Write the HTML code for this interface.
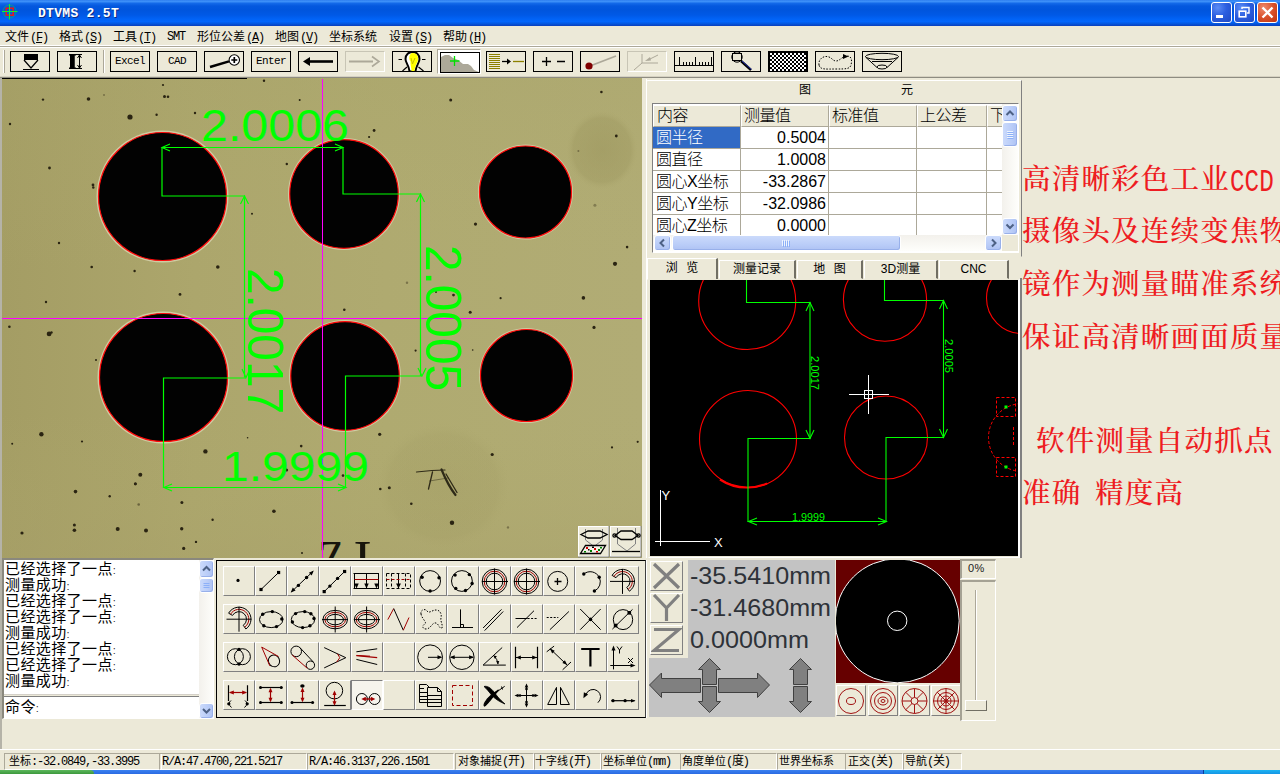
<!DOCTYPE html>
<html lang="zh-CN">
<head>
<meta charset="utf-8">
<title>DTVMS 2.5T</title>
<style>
html,body{margin:0;padding:0;}
body{width:1280px;height:774px;overflow:hidden;position:relative;background:#ECE9D8;font-family:"Liberation Sans","Noto Sans CJK SC",sans-serif;font-size:12px;color:#000;}
.abs{position:absolute;}
svg{position:absolute;overflow:hidden;}
#title{left:0;top:0;width:1280px;height:26px;background:linear-gradient(to bottom,#2F7FF0 0,#3C8FF8 1.5px,#1268E8 3.5px,#0458DE 6px,#0055DD 10px,#0059E6 15px,#0163F6 19px,#0366FC 21.5px,#0459E2 23.5px,#0A3FBC 26px);}
#title .t{left:38px;top:5.5px;font:bold 13px "Liberation Mono","Noto Sans CJK SC",monospace;color:#fff;letter-spacing:0.3px;white-space:nowrap;text-shadow:1px 1px 0 #0A2B86;}
.cb{top:2px;width:19px;height:19px;border:1px solid #fff;border-radius:3px;background:radial-gradient(circle at 30% 25%,#5B8CF5 0,#2C5FE0 45%,#1F49C4 100%);}
.cb.x{background:radial-gradient(circle at 30% 25%,#EE8A6C 0,#D9512B 50%,#BF3510 100%);}
#menu{left:0;top:26px;width:1280px;height:19px;background:#ECE9D8;}
#menu span{position:absolute;top:1px;font-size:12px;white-space:nowrap;letter-spacing:0;}
#menu span i{font-style:normal;font-family:"Liberation Mono",monospace;font-size:12px;letter-spacing:-1.2px;margin-left:1px}
.tb{position:absolute;top:51px;width:38px;height:19px;border:1px solid #000;background:#ECE9D8;box-sizing:content-box;}
.tb svg{left:0;top:0;width:38px;height:19px;}
.tb span{position:absolute;left:0;top:3px;width:38px;text-align:center;font:11px "Liberation Mono",monospace;letter-spacing:-0.6px;}
.pb{position:absolute;width:30px;height:28px;border:1px solid;border-color:#fff #808080 #808080 #fff;background:#ECE9D8;}
.pb svg{left:0;top:0;width:30px;height:28px;}
.st{position:absolute;top:753px;height:15px;border:1px solid;border-color:#ACA899 #fff #fff #ACA899;font-size:11px;line-height:15px;white-space:nowrap;overflow:hidden;}
.st b{font-weight:normal;font-family:"Liberation Mono",monospace;font-size:12px;letter-spacing:-1.2px;}
</style>
</head>
<body>
<div id="title" class="abs">
<svg style="left:1px;top:3px;width:18px;height:18px" viewBox="1 3 18 18"><circle cx="9.500" cy="11.500" r="6.500" fill="none" stroke="#18C848" stroke-width="0.700" opacity="0.700"/><rect x="6.200" y="8.200" width="7" height="7" fill="none" stroke="#F01818" stroke-width="1.500"/><path d="M9.500 4V19.500M2 11.500H17.500" stroke="#10F030" stroke-width="1.100"/></svg>
<div class="abs t">DTVMS 2.5T</div>
<div class="abs cb" style="left:1211px"><svg style="left:0;top:0;width:19px;height:19px" viewBox="0 0 19 19"><rect x="4" y="12" width="7" height="3" fill="#fff"/></svg></div>
<div class="abs cb" style="left:1234px"><svg style="left:0;top:0;width:19px;height:19px" viewBox="0 0 19 19"><path d="M7 6V4.5H14V10H12" fill="none" stroke="#fff" stroke-width="1.4"/><rect x="4.2" y="8.2" width="6.6" height="5.6" fill="none" stroke="#fff" stroke-width="1.6"/></svg></div>
<div class="abs cb x" style="left:1257px"><svg style="left:0;top:0;width:19px;height:19px" viewBox="0 0 19 19"><path d="M4.5 4.5L14.5 14.5M14.5 4.5L4.5 14.5" stroke="#fff" stroke-width="2.4"/></svg></div>
</div>
<div id="menu" class="abs">
<span style="left:5px">文件<i>(<u>F</u>)</i></span>
<span style="left:59px">格式<i>(<u>S</u>)</i></span>
<span style="left:113px">工具<i>(<u>T</u>)</i></span>
<span style="left:166px;top:3px"><i>SMT</i></span>
<span style="left:197px">形位公差<i>(<u>A</u>)</i></span>
<span style="left:275px">地图<i>(<u>V</u>)</i></span>
<span style="left:329px">坐标系统</span>
<span style="left:389px">设置<i>(<u>S</u>)</i></span>
<span style="left:443px">帮助<i>(<u>H</u>)</i></span>
</div>
<div class="abs" style="left:0;top:45px;width:1280px;height:1px;background:#fff"></div>
<div class="abs" style="left:0;top:46px;width:1280px;height:1px;background:#ACA899"></div>
<div class="abs" style="left:0;top:47px;width:1280px;height:1px;background:#fff"></div>
<div class="abs" style="left:3px;top:50px;width:1px;height:23px;background:#fff"></div>
<div class="abs" style="left:4px;top:50px;width:1px;height:23px;background:#ACA899"></div>
<div class="abs" style="left:103px;top:50px;width:1px;height:23px;background:#ACA899"></div>
<div class="abs" style="left:104px;top:50px;width:1px;height:23px;background:#fff"></div>
<div class="tb" style="left:10px"><svg viewBox="0 0 38 19"><path d="M13 2H27V8H13Z" fill="#000"/><path d="M13 8L20 16L27 8M12 17.5H28" fill="none" stroke="#000" stroke-width="1.2"/></svg></div>
<div class="tb" style="left:57px"><svg viewBox="0 0 38 19"><path d="M11 2H18V3.5H16.5V15.5H18V17H11V15.5H12V3.5H11Z" fill="#000"/><path d="M11 2.5H24M11 16.5H24M21.5 3V16M19.5 6L21.5 3L23.5 6M19.5 13L21.5 16L23.5 13" fill="none" stroke="#000" stroke-width="1"/><rect x="12" y="3" width="4.5" height="13" fill="#000"/></svg></div>
<div class="tb" style="left:110px"><span>Excel</span></div>
<div class="tb" style="left:157px"><span>CAD</span></div>
<div class="tb" style="left:204px"><svg viewBox="0 0 38 19"><path d="M5 15L24 9.300" stroke="#000" stroke-width="2.400"/><circle cx="29.300" cy="8" r="5.200" fill="#fff" stroke="#000" stroke-width="1.100"/><path d="M26.300 8H32.300M29.300 5V11" stroke="#000" stroke-width="1.700"/></svg></div>
<div class="tb" style="left:251px"><span>Enter</span></div>
<div class="tb" style="left:298px"><svg viewBox="0 0 38 19"><path d="M9 9.5H34" stroke="#000" stroke-width="2.6"/><path d="M4 9.5L11 5V14Z" fill="#000"/></svg></div>
<div class="tb" style="left:345px;border-color:#C8C5B5 #fff #fff #C8C5B5;background:#ECE9D8"><svg viewBox="0 0 38 19"><path d="M3 9.5H27" stroke="#ACA899" stroke-width="2"/><path d="M26 4.5L33 9.5L26 14.5" fill="none" stroke="#ACA899" stroke-width="1.6"/></svg></div>
<div class="tb" style="left:392px"><svg viewBox="0 0 38 19"><path d="M12.500 7C12.500 -2.500 26.500 -2.500 26.500 7C26.500 11 23 13 22.500 19.500H16.500C16 13 12.500 11 12.500 7Z" fill="#fff" stroke="#000" stroke-width="2"/><path d="M19 1C24.500 0.500 25.500 5 25 8C24.500 11 22 13.500 21.500 19H18.500C18.500 15 17 12.500 17.500 9.500C15.500 7 16 2 19 1Z" fill="#FFFF00"/><path d="M18 6L19.500 12L22 6" fill="none" stroke="#C8C000" stroke-width="1"/><path d="M5.500 7.500H9M29 7.500H32.500M14 15L9.500 19M25.500 15L30.500 19" stroke="#000" stroke-width="1.200"/></svg></div>
<div class="abs" style="left:437px;top:49px;width:44px;height:25px;background:#fff;border:1px solid;border-color:#ACA899 #fff #fff #ACA899;box-sizing:border-box"></div>
<div class="tb" style="left:440px;top:52px;background:#fff"><svg viewBox="0 0 38 19"><path d="M0 19V4L4 2H8L12 5L17 7L22 11H27L30 13L33 17L38 19Z" fill="#ACA899"/><path d="M13.5 3V13M9 8H18.5" stroke="#00E000" stroke-width="1.3"/></svg></div>
<div class="tb" style="left:486px"><svg viewBox="0 0 38 19"><path d="M2 2.500H13M2 4.500H13M2 6.500H13M2 8.500H13M2 10.500H13M2 12.500H13M2 14.500H13M2 16.500H13" stroke="#8C8000" stroke-width="1"/><path d="M15 9.500H21" stroke="#000" stroke-width="1.3"/><path d="M20 6.500L24 9.500L20 12.500Z" fill="#000"/><path d="M26 9.500H37" stroke="#8C8000" stroke-width="1.3"/></svg></div>
<div class="tb" style="left:533px"><svg viewBox="0 0 38 19"><path d="M8 9.500H17M12.500 5V14M23 9.500H31" stroke="#000" stroke-width="1.3"/></svg></div>
<div class="tb" style="left:580px"><svg viewBox="0 0 38 19"><path d="M9 14L35 4" stroke="#ACA899" stroke-width="1.8"/><circle cx="8" cy="14" r="3.600" fill="#800000"/></svg></div>
<div class="tb" style="left:627px;border-color:#C8C5B5 #fff #fff #C8C5B5"><svg viewBox="0 0 38 19"><path d="M6 18L14 11H30M14 11V2" fill="none" stroke="#ACA899" stroke-width="1"/><path d="M30 3L20 8" stroke="#ACA899" stroke-width="1"/><path d="M17 9L22 5L23 8.500Z" fill="#ACA899"/></svg></div>
<div class="tb" style="left:674px"><svg viewBox="0 0 38 19"><path d="M0 13.500H38" stroke="#000" stroke-width="1.2"/><path d="M4.500 13V5M8.500 13V10M11.500 13V10M14.500 13V10M17.500 13V10M20.500 13V5M24.500 13V10M27.500 13V10M30.500 13V10M33.500 13V10M36.500 13V5" stroke="#000" stroke-width="1"/></svg></div>
<div class="tb" style="left:721px"><svg viewBox="0 0 38 19"><rect x="10.500" y="1.500" width="9" height="7" fill="none" stroke="#000"/><circle cx="15" cy="5" r="5.200" fill="none" stroke="#000" stroke-width="1"/><path d="M19 9L29 18" stroke="#000" stroke-width="2.400"/><path d="M20 9L29.500 17.500" stroke="#2030C0" stroke-width="0.900"/></svg></div>
<div class="tb" style="left:768px;background:#000"><svg viewBox="0 0 38 19"><defs><pattern id="chk" x="1" y="1" width="4" height="4" patternUnits="userSpaceOnUse"><rect width="4" height="4" fill="#000"/><rect width="2" height="2" fill="#fff"/><rect x="2" y="2" width="2" height="2" fill="#fff"/></pattern></defs><rect x="1" y="1" width="36" height="18" fill="url(#chk)"/><rect x="37" y="0" width="1" height="19" fill="#000"/></svg></div>
<div class="tb" style="left:815px"><svg viewBox="0 0 38 19"><path d="M3 13C2 7 8 3 13 5C16 6 17 9 20 9C24 9 25 5 31 4C36 4 36 9 35 13C34 17 30 17 20 17C10 17 4 18 3 13Z" fill="none" stroke="#000" stroke-width="1" stroke-dasharray="1.500 1.500"/><path d="M27 2L32.500 4.500L27 7Z" fill="#000"/></svg></div>
<div class="tb" style="left:862px"><svg viewBox="0 0 38 19"><ellipse cx="19" cy="4.500" rx="16.500" ry="3.200" fill="none" stroke="#000"/><ellipse cx="19" cy="15" rx="5" ry="2" fill="none" stroke="#000"/><path d="M2.500 5L14 15.500M35.500 5L24 15.500M9 9.500H29" fill="none" stroke="#000"/></svg></div>
<div class="abs" style="left:0;top:76px;width:1280px;height:1px;background:#D6D2C2"></div>
<div class="abs" style="left:0;top:77px;width:1280px;height:1px;background:#8E8C81"></div>
<div class="abs" style="left:2px;top:78px;width:245px;height:1px;background:#000"></div>
<div class="abs" style="left:0;top:78px;width:2px;height:671px;background:#B5B3A8"></div>
<svg style="left:2px;top:78px;width:640px;height:480px" viewBox="2 78 640 480">
<defs>
<linearGradient id="vbg" x1="0" y1="0" x2="1" y2="0"><stop offset="0" stop-color="#A49D64"/><stop offset="0.3" stop-color="#ACA66C"/><stop offset="0.6" stop-color="#AFAA70"/><stop offset="1" stop-color="#B1AC75"/></linearGradient>
<linearGradient id="vtr" x1="0" y1="0" x2="0" y2="1"><stop offset="0" stop-color="#A8A46A" stop-opacity="0.300"/><stop offset="0.4" stop-color="#B0AB6E" stop-opacity="0"/><stop offset="0.7" stop-color="#B0AB6E" stop-opacity="0"/><stop offset="1" stop-color="#A8A16A" stop-opacity="0.400"/></linearGradient>
<radialGradient id="blob"><stop offset="0" stop-color="#969058" stop-opacity="0.45"/><stop offset="0.8" stop-color="#9A945C" stop-opacity="0.35"/><stop offset="1" stop-color="#ADA86E" stop-opacity="0"/></radialGradient>
</defs>
<rect x="2" y="78" width="640" height="480" fill="url(#vbg)"/>
<rect x="2" y="78" width="640" height="480" fill="url(#vtr)"/>
<ellipse cx="602" cy="150" rx="36" ry="40" fill="url(#blob)"/>
<ellipse cx="443" cy="486" rx="68" ry="64" fill="url(#blob)" opacity="0.45"/>
<g fill="#CFCBA2">
<circle cx="162.500" cy="196.500" r="66"/><circle cx="344" cy="194" r="56"/><circle cx="525.500" cy="192" r="47.500"/>
<circle cx="163.500" cy="377.500" r="66"/><circle cx="345" cy="376" r="56"/><circle cx="526.500" cy="375.500" r="47.500"/>
</g>
<g fill="#020202" stroke="#FF0A0A" stroke-width="1.200">
<circle cx="162.500" cy="196.500" r="64"/><circle cx="344" cy="194" r="54.300"/><circle cx="525.500" cy="192" r="46"/>
<circle cx="163.500" cy="377.500" r="64"/><circle cx="345" cy="376" r="54.300"/><circle cx="526.500" cy="375.500" r="46"/>
</g>
<g id="specks" fill="#2A2412"><circle cx="9.4" cy="326.8" r="1.3"/><circle cx="49.1" cy="333.9" r="2.4"/><circle cx="51.5" cy="332.5" r="1.2"/><circle cx="96" cy="359.9" r="1"/><circle cx="41.4" cy="434.3" r="2.2"/><circle cx="12.2" cy="443.7" r="1"/><circle cx="82" cy="441.5" r="1.1"/><circle cx="205.4" cy="451.4" r="2.2"/><circle cx="140.3" cy="474.7" r="2"/><circle cx="135.3" cy="484" r="1.2"/><circle cx="273.9" cy="511.2" r="1.8"/><circle cx="301.2" cy="446.1" r="1.3"/><circle cx="286.6" cy="470" r="1.5"/><circle cx="247.6" cy="437.8" r="0.8"/><circle cx="302" cy="553" r="1"/><circle cx="10" cy="124" r="1.2"/><circle cx="43" cy="99.6" r="1.2"/><circle cx="88.5" cy="99" r="1.8"/><circle cx="104" cy="95" r="1" opacity="0.4"/><circle cx="130" cy="117" r="2.6"/><circle cx="163" cy="85" r="1.1"/><circle cx="164.5" cy="96.5" r="1.5"/><circle cx="168" cy="96.8" r="1.3"/><circle cx="156.6" cy="114.8" r="1.2"/><circle cx="195" cy="113" r="1.2"/><circle cx="49.5" cy="168" r="1.4"/><circle cx="93" cy="185" r="1.4"/><circle cx="93.3" cy="187.5" r="1.2"/><circle cx="59" cy="243" r="1.2"/><circle cx="91.7" cy="267" r="1.3"/><circle cx="134.6" cy="271" r="1.2"/><circle cx="217.8" cy="267" r="1.8"/><circle cx="180" cy="294.4" r="1.4"/><circle cx="46" cy="302" r="1.2"/><circle cx="286.8" cy="164" r="1.2"/><circle cx="252" cy="213.7" r="1"/><circle cx="264" cy="80.7" r="1.2"/><circle cx="299.7" cy="100" r="1"/><circle cx="75.5" cy="491.6" r="1.8"/><circle cx="109.7" cy="496.3" r="1.2"/><circle cx="135.4" cy="483.7" r="1.5"/><circle cx="138.7" cy="504.5" r="1.3" opacity="0.5"/><circle cx="181.9" cy="502.5" r="1.5"/><circle cx="74.4" cy="525" r="1.5"/><circle cx="74.4" cy="530.2" r="1.8"/><circle cx="22" cy="533" r="1.6"/><circle cx="117.7" cy="529" r="2"/><circle cx="146" cy="530.6" r="2"/><circle cx="181.7" cy="528.7" r="1.7"/><circle cx="212.6" cy="519.7" r="1.2"/><circle cx="196" cy="541.9" r="1.2"/><circle cx="183.7" cy="548.4" r="1.6"/><circle cx="450.7" cy="100.1" r="1.5"/><circle cx="374.1" cy="130.5" r="1.4"/><circle cx="369.1" cy="137" r="1.1"/><circle cx="601.4" cy="92" r="1.3"/><circle cx="616.3" cy="136" r="1.4"/><circle cx="578.4" cy="151" r="1" opacity="0.4"/><circle cx="475.5" cy="224.1" r="1.6"/><circle cx="594.9" cy="205.2" r="1.5" opacity="0.35"/><circle cx="627.1" cy="247.1" r="1.3"/><circle cx="615" cy="263.8" r="2.1"/><circle cx="583.4" cy="297.9" r="1.8"/><circle cx="500.6" cy="298.2" r="1.1"/><circle cx="470.2" cy="312.2" r="1.5"/><circle cx="453.5" cy="295.1" r="1.4"/><circle cx="344.3" cy="309.7" r="1.3"/><circle cx="407" cy="282.7" r="1.2" opacity="0.4"/><circle cx="436" cy="292" r="1"/><circle cx="594" cy="327.4" r="1.6"/><circle cx="415.6" cy="350.6" r="1.1"/><circle cx="472.7" cy="350" r="0.8"/><circle cx="379.7" cy="434.3" r="1.6"/><circle cx="492.2" cy="454.5" r="1.6"/><circle cx="612" cy="447.4" r="1.1"/><circle cx="637.7" cy="441.8" r="1.1"/><circle cx="380.3" cy="489" r="1.3"/><circle cx="389.3" cy="487.7" r="1.5"/><circle cx="411.3" cy="503.8" r="1.3"/><circle cx="452" cy="522.7" r="2.2"/><circle cx="508" cy="527.4" r="1.2" opacity="0.4"/><circle cx="343" cy="475.6" r="1.3"/></g>
<g font-family="Liberation Serif,serif" font-size="52" fill="#17150C"><text transform="translate(318.500 577) scale(0.800 1)">Z</text><text transform="translate(353.500 577) scale(1.050 1)">I</text></g>
<g fill="none" stroke="#2E2A18" stroke-linecap="round"><path d="M416.500 472L432 470.500L445 470" stroke-width="1.200"/><path d="M432.500 472L428.500 489" stroke-width="1.300"/><path d="M441.500 469.500C445 478 450 488 455.500 495" stroke-width="2.200"/><path d="M446 474L457 492.500" stroke-width="1.300"/><path d="M429.500 481L448 478" stroke-width="0.800" opacity="0.600"/></g>
<rect x="2" y="78" width="245" height="1" fill="#000"/>
<path d="M2 318.500H642M322.500 79V558" stroke="#FF00FF" stroke-width="1" fill="none"/>
<g fill="none" stroke="#00FF00" stroke-width="1.200">
<path d="M162 147.500H343"/><path d="M162 147.500V196H244.500V377.500"/><path d="M343 147.500V194H420.500V376"/>
<path d="M246 378H163.500V487.500H346"/><path d="M422 376H345.500V487.500"/>
<path d="M170 144L162 147.500L170 151M335 144L343 147.500L335 151"/>
<path d="M240.500 204L244.500 196L248.500 204M242 369L246 377.500L250 369"/>
<path d="M416.500 202L420.500 194L424.500 202M418 368L422 376L426 368"/>
<path d="M172 484L164 487.500L172 491M338 484L346 487.500L338 491"/>
</g>
<g font-family="Liberation Sans,sans-serif" font-size="46" fill="#00FF00">
<text x="201" y="141.500" textLength="148" lengthAdjust="spacingAndGlyphs" transform="translate(0 141.500) scale(1 0.970) translate(0 -141.500)">2.0006</text>
<text x="222" y="481" textLength="147" lengthAdjust="spacingAndGlyphs" transform="translate(0 481) scale(1 0.920) translate(0 -481)">1.9999</text>
<text x="0" y="0" textLength="146" lengthAdjust="spacingAndGlyphs" transform="translate(247.800 268) rotate(90) scale(1 1.070)">2.0017</text>
<text x="0" y="0" textLength="146" lengthAdjust="spacingAndGlyphs" transform="translate(425.800 245) rotate(90) scale(1 1.070)">2.0005</text>
</g>
<g>
<rect x="578.500" y="526.500" width="30" height="30" fill="#ECE9D8" stroke="#fff"/><path d="M609 526V557H578" fill="none" stroke="#808080"/>
<rect x="610.500" y="526.500" width="30" height="30" fill="#ECE9D8" stroke="#fff"/><path d="M641 526V557H610" fill="none" stroke="#808080"/>
<g fill="none" stroke="#000" stroke-width="1.300">
<path d="M585.500 529V540L594 546.500M602.500 529V540L594 546.500" stroke="#808080" stroke-width="1"/>
<path d="M581 534.500L588 531H600L607 534.500L600 538H588Z"/>
<path d="M585.500 545.500H605.500L600.500 553.500H580.500Z" fill="#F4F2E8"/>
<g stroke="none"><rect x="586" y="547" width="2" height="2" fill="#D00000"/><rect x="590" y="550" width="2" height="2" fill="#008000"/><rect x="594" y="548" width="2" height="2" fill="#D00000"/><rect x="598" y="549" width="2" height="2" fill="#008000"/><rect x="584" y="551" width="2" height="1.500" fill="#008000"/><rect x="592" y="546.500" width="2" height="1.500" fill="#000"/><rect x="596" y="551" width="2" height="1.500" fill="#D00000"/><rect x="600" y="547" width="2" height="1.500" fill="#008000"/><rect x="588" y="549" width="1.500" height="1.500" fill="#000"/></g>
<path d="M617.500 528V544L627 551M635.500 528V544L627 551" stroke="#808080" stroke-width="1"/>
<path d="M615 535.500L621 531H632L638 535.500L632 539.500H621Z"/>
<circle cx="614.500" cy="535.500" r="1.600"/><circle cx="638.500" cy="535.500" r="1.600"/>
<path d="M612 551.500H640"/>
</g>
</g>
</svg>
<style>
#grp{left:646px;top:80px;width:376px;height:177px;border:1px solid;border-color:#fff #808080 transparent #fff;box-sizing:border-box;border-radius:2px 0 0 0}
#tblwrap{left:652px;top:103px;width:367px;height:150px;border:1px solid;border-color:#808080 #fff #fff #808080;box-sizing:border-box;background:#fff;overflow:hidden;}
#tbl{position:absolute;left:0;top:1px;width:349px;height:131px;overflow:hidden;background:#fff;}
#tbl div{position:absolute;box-sizing:border-box;height:22px;border-right:1px solid #ACA899;border-bottom:1px solid #ACA899;font-size:16px;line-height:21px;white-space:nowrap;overflow:hidden;font-family:"Liberation Sans","Noto Sans CJK SC",sans-serif;font-weight:300}
#tbl div.h{background:#ECE9D8;border-top:1px solid #fff;border-left:1px solid #fff;line-height:20px}
#tbl div.c0{left:0;width:88px;padding-left:3px;letter-spacing:-0.5px}
#tbl div.c1{left:88px;width:88px;text-align:right;padding-right:2px;}
#tbl div.c2{left:176px;width:88px;}
#tbl div.c3{left:264px;width:70px;}
#tbl div.c4{left:334px;width:30px;}
#tbl div.h.c1,#tbl div.h.c2,#tbl div.h.c3,#tbl div.h.c4{text-align:left;padding-left:2px;letter-spacing:-0.5px}
.sbtn{position:absolute;box-sizing:border-box;border:1px solid #fff;border-radius:3px;background:linear-gradient(to right,#CBDAFB,#BACDF8 60%,#AEC2F3);box-shadow:inset -1px -1px 0 #98B0EA;}
.sbtn.hz{background:linear-gradient(to bottom,#CBDAFB,#BACDF8 60%,#AEC2F3);}
.sbtn svg{left:0;top:0}
.tab{word-spacing:5px;position:absolute;top:260px;height:19px;box-sizing:border-box;border:1px solid;border-color:#fff #716F64 transparent #fff;border-right-width:2px;text-align:center;font-size:12px;line-height:17px;white-space:nowrap;}
.tab.sel{top:258px;height:22px;line-height:19px;background:#ECE9D8;}
</style>
<div class="abs" style="left:646px;top:79px;width:1px;height:479px;background:#fff"></div>
<div id="grp" class="abs"></div>
<div class="abs" style="left:799px;top:83px;font-size:12px;line-height:14px">图</div>
<div class="abs" style="left:901px;top:83px;font-size:12px;line-height:14px">元</div>
<div id="tblwrap" class="abs">
<div id="tbl">
<div class="h c0" style="top:0">内容</div><div class="h c1" style="top:0">测量值</div><div class="h c2" style="top:0">标准值</div><div class="h c3" style="top:0">上公差</div><div class="h c4" style="top:0">下公差</div>
<div class="c0" style="top:22px;background:#316AC5;color:#fff">圆半径</div><div class="c1" style="top:22px">0.5004</div><div class="c2" style="top:22px"></div><div class="c3" style="top:22px"></div><div class="c4" style="top:22px"></div>
<div class="c0" style="top:44px">圆直径</div><div class="c1" style="top:44px">1.0008</div><div class="c2" style="top:44px"></div><div class="c3" style="top:44px"></div><div class="c4" style="top:44px"></div>
<div class="c0" style="top:66px">圆心X坐标</div><div class="c1" style="top:66px">-33.2867</div><div class="c2" style="top:66px"></div><div class="c3" style="top:66px"></div><div class="c4" style="top:66px"></div>
<div class="c0" style="top:88px">圆心Y坐标</div><div class="c1" style="top:88px">-32.0986</div><div class="c2" style="top:88px"></div><div class="c3" style="top:88px"></div><div class="c4" style="top:88px"></div>
<div class="c0" style="top:110px">圆心Z坐标</div><div class="c1" style="top:110px">0.0000</div><div class="c2" style="top:110px"></div><div class="c3" style="top:110px"></div><div class="c4" style="top:110px"></div>
</div>
<div class="abs" style="left:349px;top:0;width:16px;height:131px;background:linear-gradient(to right,#F3F1EC,#FEFEFB)"></div>
<div class="sbtn" style="left:349px;top:1px;width:16px;height:17px"><svg style="width:14px;height:15px" viewBox="0 0 14 15"><path d="M3.500 9L7 5.500L10.500 9" fill="none" stroke="#4D6185" stroke-width="2"/></svg></div>
<div class="sbtn" style="left:349px;top:18px;width:16px;height:25px"><svg style="width:14px;height:23px" viewBox="0 0 14 23"><path d="M4 8.500H10M4 10.500H10M4 12.500H10M4 14.500H10" stroke="#EEF4FE" stroke-width="1"/><path d="M4.500 9.500H10.500M4.500 11.500H10.500M4.500 13.500H10.500M4.500 15.500H10.500" stroke="#8CB0F8" stroke-width="1"/></svg></div>
<div class="sbtn" style="left:349px;top:114px;width:16px;height:17px"><svg style="width:14px;height:15px" viewBox="0 0 14 15"><path d="M3.500 5.500L7 9L10.500 5.500" fill="none" stroke="#4D6185" stroke-width="2"/></svg></div>
<div class="abs" style="left:0;top:131px;width:349px;height:16px;background:linear-gradient(to bottom,#F3F1EC,#FEFEFB)"></div>
<div class="sbtn hz" style="left:1px;top:131px;width:17px;height:16px"><svg style="width:15px;height:14px" viewBox="0 0 15 14"><path d="M9 3.500L5.500 7L9 10.500" fill="none" stroke="#4D6185" stroke-width="2"/></svg></div>
<div class="sbtn hz" style="left:19px;top:131px;width:229px;height:16px"><svg style="width:227px;height:14px" viewBox="0 0 227 14"><path d="M109.500 4V10M111.500 4V10M113.500 4V10M115.500 4V10" stroke="#EEF4FE" stroke-width="1"/><path d="M110.500 5V11M112.500 5V11M114.500 5V11M116.500 5V11" stroke="#8CB0F8" stroke-width="1"/></svg></div>
<div class="sbtn hz" style="left:332px;top:131px;width:17px;height:16px"><svg style="width:15px;height:14px" viewBox="0 0 15 14"><path d="M6 3.500L9.500 7L6 10.500" fill="none" stroke="#4D6185" stroke-width="2"/></svg></div>
<div class="abs" style="left:349px;top:131px;width:16px;height:16px;background:#ECE9D8"></div>
</div>
<div class="abs" style="left:647px;top:279px;width:374px;height:1px;background:#fff"></div>
<div class="tab" style="left:719px;width:77px">测量记录</div>
<div class="tab" style="left:797px;width:66px">地 图</div>
<div class="tab" style="left:864px;width:74px">3D测量</div>
<div class="tab" style="left:939px;width:70px">CNC</div>
<div class="tab sel" style="left:647px;width:71px">浏 览</div>
<div class="abs" style="left:648px;top:279px;width:372px;height:279px;border:1px solid;border-color:transparent #fff #fff transparent;border-right-width:2px;box-sizing:border-box;background:#ECE9D8"></div>
<div class="abs" style="left:1020px;top:278px;width:2px;height:280px;background:#808080"></div>
<svg style="left:650px;top:280px;width:368px;height:276px;background:#000" viewBox="650 280 368 276">
<g fill="none" stroke="#FF0000" stroke-width="1.100">
<circle cx="747.200" cy="301" r="48.500"/><circle cx="885" cy="299.700" r="41.600"/><circle cx="1022" cy="298" r="35.500"/>
<circle cx="748" cy="439" r="48.500"/><circle cx="886" cy="437.500" r="41.500"/>
<path d="M720 479.500A48.500 48.500 0 0 0 748 487.500A48.500 48.500 0 0 0 767 483.500" stroke-width="2.200"/>
<g stroke-dasharray="3 2" stroke-width="1">
<rect x="996.500" y="397.500" width="19" height="19"/><rect x="996.500" y="457.500" width="19" height="19"/>
<circle cx="1022.500" cy="437.500" r="34"/><path d="M1013.500 427V447"/>
</g>
</g>
<rect x="1004.500" y="405.500" width="3" height="3" fill="#00FF00"/><rect x="1004.500" y="465.500" width="3" height="3" fill="#00FF00"/>
<g fill="none" stroke="#00FF00" stroke-width="1.100">
<path d="M746.500 280V302.500H810V438.500H748V521.500H886.500"/>
<path d="M884.500 280V300.500H943.500V437.500H886V521.500"/>
<path d="M806 311L810 302.500L814 311M806 430L810 438.500L814 430"/>
<path d="M939.500 309L943.500 300.500L947.500 309M939.500 429L943.500 437.500L947.500 429"/>
<path d="M757 518L748.500 521.500L757 525M878 518L886.500 521.500L878 525"/>
</g>
<g font-family="Liberation Sans,sans-serif" font-size="11" fill="#00FF00">
<text x="792" y="521" textLength="33" lengthAdjust="spacingAndGlyphs">1.9999</text>
<text x="0" y="0" textLength="34" lengthAdjust="spacingAndGlyphs" transform="translate(811 356) rotate(90)">2.0017</text>
<text x="0" y="0" textLength="34" lengthAdjust="spacingAndGlyphs" transform="translate(944.500 339) rotate(90)">2.0005</text>
</g>
<g fill="none" stroke="#fff" stroke-width="1">
<path d="M849 394.500H889M868.500 375V414"/><rect x="864.500" y="390.500" width="8" height="8"/>
<path d="M660.500 490V546M655 541.500H710"/>
</g>
<g font-family="Liberation Sans,sans-serif" font-size="13" fill="#fff">
<text x="661.500" y="499.500">Y</text><text x="714" y="547">X</text>
</g>
</svg>
<style>
.rt{position:absolute;left:1022px;color:#EE1C22;font-family:"Liberation Serif","Noto Serif CJK SC",serif;font-size:28.5px;line-height:30px;letter-spacing:1.2px;white-space:nowrap;font-weight:500;}
.rt i{font-style:normal;font-family:"Liberation Mono",monospace;font-size:32px;letter-spacing:0;display:inline-block;transform:scaleX(0.76);transform-origin:0 50%;line-height:30px;vertical-align:-2px;font-weight:400}
.rt b{display:inline-block;width:13.6px}
</style>
<div class="abs" style="left:1022px;top:150px;width:258px;height:380px;overflow:hidden">
<div class="rt" style="left:0px;top:15px">高清晰彩色工业<i>CCD</i></div>
<div class="rt" style="left:0px;top:67px">摄像头及连续变焦物</div>
<div class="rt" style="left:0px;top:120px">镜作为测量瞄准系统</div>
<div class="rt" style="left:0px;top:173px">保证高清晰画面质量</div>
<div class="rt" style="left:14px;top:277px">软件测量自动抓点</div>
<div class="rt" style="left:0px;top:329px">准确<b></b>精度高</div>
</div>
<style>
#log{left:2px;top:558px;width:212px;height:161px;border:2px solid;border-color:#8A887D #fff #fff #8A887D;border-right-width:1px;border-bottom-width:1px;box-sizing:border-box;background:#fff;overflow:hidden;}
#log .ln{position:absolute;left:1px;font-size:15px;line-height:16px;white-space:nowrap;font-family:"Liberation Sans","Noto Sans CJK SC",sans-serif;font-weight:400;letter-spacing:0.4px}
#log .ln i{font-style:normal;color:#333;font-size:11px;letter-spacing:0}
.xyz{position:absolute;left:650px;width:33px;height:30px;box-sizing:border-box;border:1px solid;border-color:#fff #808080 #808080 #fff;background:#ECE9D8;}
.xyz svg{left:0;top:0;width:31px;height:28px}
.cbt{position:absolute;top:685px;width:30px;height:31px;box-sizing:border-box;border:1px solid;border-color:#fff #808080 #808080 #fff;background:#ECE9D8;}
.cbt svg{left:0;top:0;width:28px;height:29px}
</style>
<div id="log" class="abs">
<div class="ln" style="top:1px">已经选择了一点<i>:</i></div>
<div class="ln" style="top:17px">测量成功<i>:</i></div>
<div class="ln" style="top:33px">已经选择了一点<i>:</i></div>
<div class="ln" style="top:49px">已经选择了一点<i>:</i></div>
<div class="ln" style="top:65px">测量成功<i>:</i></div>
<div class="ln" style="top:81px">已经选择了一点<i>:</i></div>
<div class="ln" style="top:97px">已经选择了一点<i>:</i></div>
<div class="ln" style="top:113px">测量成功<i>:</i></div>
<div class="abs" style="left:0;top:134px;width:195px;height:3px;background:#ECE9D8;border-top:1px solid #D4D0C8;border-bottom:1px solid #808080;box-sizing:border-box"></div>
<div class="ln" style="top:139px">命令<i>:</i></div>
<div class="abs" style="left:195px;top:0;width:15px;height:159px;background:linear-gradient(to right,#F3F1EC,#FEFEFB)"></div>
<div class="sbtn" style="left:195px;top:0;width:15px;height:18px"><svg style="width:13px;height:16px" viewBox="0 0 13 16"><path d="M3 9.500L6.500 6L10 9.500" fill="none" stroke="#4D6185" stroke-width="2"/></svg></div>
<div class="sbtn" style="left:195px;top:18px;width:15px;height:15px"><svg style="width:13px;height:13px" viewBox="0 0 13 13"><path d="M3.500 4.500H9.500M3.500 6.500H9.500M3.500 8.500H9.500" stroke="#8CB0F8" stroke-width="1"/></svg></div>
<div class="sbtn" style="left:195px;top:143px;width:15px;height:16px"><svg style="width:13px;height:14px" viewBox="0 0 13 14"><path d="M3 5L6.500 8.500L10 5" fill="none" stroke="#4D6185" stroke-width="2"/></svg></div>
</div>
<div class="abs" style="left:649px;top:560px;width:186px;height:157px;background:#C3C3C3"></div>
<div class="abs" style="left:649px;top:560px;width:39px;height:98px;background:#ECE9D8"></div>
<div class="xyz" style="top:561px"><svg viewBox="0 0 31 28"><path d="M3 2L28 26M28 2L3 26" stroke="#808080" stroke-width="3.200"/></svg></div>
<div class="xyz" style="top:593px"><svg viewBox="0 0 31 28"><path d="M3 1L15.500 14L28 1M15.500 13V27" fill="none" stroke="#808080" stroke-width="3.200"/></svg></div>
<div class="xyz" style="top:625px"><svg viewBox="0 0 31 28"><path d="M3 3.500H28L3 24.500H28" fill="none" stroke="#808080" stroke-width="3.200"/></svg></div>
<svg style="left:688px;top:560px;width:147px;height:98px" viewBox="688 560 147 98">
<g font-family="Liberation Sans,sans-serif" font-size="23.500" fill="#2E3238">
<text x="690" y="583.700" textLength="141" lengthAdjust="spacingAndGlyphs">-35.5410mm</text>
<text x="690" y="616" textLength="141" lengthAdjust="spacingAndGlyphs">-31.4680mm</text>
<text x="690" y="647.800" textLength="119" lengthAdjust="spacingAndGlyphs">0.0000mm</text>
</g>
</svg>
<svg style="left:649px;top:657px;width:186px;height:60px" viewBox="649 657 186 60">
<g fill="#808080" stroke="#404040" stroke-width="1">
<path d="M649.500 685L661.500 673V678.500H700.500V692.500H661.500V697.500Z"/>
<path d="M769.500 685L757.500 673V678.500H718.500V692.500H757.500V697.500Z"/>
<path d="M709.500 658.500L720.500 669.500H716.500V684.500H702.500V669.500H698.500Z"/>
<path d="M709.500 712.500L720.500 701.500H716.500V686.500H702.500V701.500H698.500Z"/>
<path d="M800.500 658.500L811.500 669.500H807.500V684.500H793.500V669.500H789.500Z"/>
<path d="M800.500 712.500L811.500 701.500H807.500V686.500H793.500V701.500H789.500Z"/>
</g>
</svg>
<svg style="left:836px;top:560px;width:124px;height:123px;background:#660000" viewBox="836 560 124 123">
<circle cx="897.200" cy="620.800" r="62" fill="#000" stroke="#fff" stroke-width="1"/>
<circle cx="897.200" cy="620.800" r="9.700" fill="none" stroke="#fff" stroke-width="1"/>
</svg>
<div class="cbt" style="left:836px"><svg viewBox="0 0 28 29"><g fill="none" stroke="#A01010" stroke-width="1"><circle cx="14" cy="15" r="12.500"/><ellipse cx="14" cy="15" rx="4.500" ry="3.500"/></g></svg></div>
<div class="cbt" style="left:868px;width:30px"><svg viewBox="0 0 28 29"><g fill="none" stroke="#A01010" stroke-width="1"><circle cx="14" cy="15" r="12.500"/><circle cx="14" cy="15" r="8.500"/><ellipse cx="14" cy="15" rx="5" ry="4"/><ellipse cx="14" cy="15" rx="2" ry="1.500"/></g></svg></div>
<div class="cbt" style="left:899px;width:31px"><svg viewBox="0 0 28 29"><g fill="none" stroke="#A01010" stroke-width="1"><circle cx="14.500" cy="15" r="12.500"/><circle cx="14.500" cy="15" r="3.500"/><path d="M14.500 2.500V11.500M14.500 18.500V27.500M2 15H11M18 15H27M5.700 6.200L12 12.500M17 17.500L23.300 23.800M23.300 6.200L17 12.500M12 17.500L5.700 23.800"/></g></svg></div>
<div class="cbt" style="left:931px"><svg viewBox="0 0 28 29"><g fill="none" stroke="#A01010" stroke-width="1"><circle cx="14" cy="15" r="12.500"/><circle cx="14" cy="15" r="8.500"/><circle cx="14" cy="15" r="5"/><circle cx="14" cy="15" r="2"/><path d="M14 2.500V27.500M1.500 15H26.500M5.200 6.200L22.800 23.800M22.800 6.200L5.200 23.800"/></g></svg></div>
<div class="abs" style="left:960px;top:559px;width:36px;height:20px;box-sizing:border-box;border:2px solid;border-color:#A5A294 #fff #fff #A5A294;border-right-width:1px;border-bottom-width:1px;font-size:11px;line-height:15px;padding-left:6px;letter-spacing:0.5px;color:#222">0%</div>
<div class="abs" style="left:960px;top:580px;width:36px;height:141px;box-sizing:border-box;border:2px solid;border-color:#A5A294 #fff #fff #A5A294;border-right-width:1px;border-bottom-width:1px"></div>
<div class="abs" style="left:975px;top:590px;width:1px;height:111px;background:#ACA899"></div>
<div class="abs" style="left:976px;top:590px;width:1px;height:111px;background:#fff"></div>
<div class="abs" style="left:965px;top:700px;width:22px;height:11px;box-sizing:border-box;border:1px solid;border-color:#fff #716F64 #716F64 #fff;background:#ECE9D8"></div>
<div class="abs" style="left:216px;top:560px;width:430px;height:158px;box-sizing:border-box;border:1px solid #000;border-right-color:#404040;background:#ECE9D8"></div>
<div class="abs" style="left:646px;top:560px;width:1px;height:158px;background:#fff"></div>
<div class="pb" style="left:223px;top:566px"><svg viewBox="-1 0 30 28"><circle cx="13" cy="13.4" r="1.6" fill="#000"/></svg></div>
<div class="pb" style="left:255px;top:566px"><svg viewBox="-1 0 30 28"><path d="M4 22.5L21.6 5.5" stroke="#000" stroke-width="1" fill="none" /><rect x="2.4" y="20.9" width="3.2" height="3.2" fill="#000"/><rect x="20.0" y="3.9" width="3.2" height="3.2" fill="#000"/></svg></div>
<div class="pb" style="left:287px;top:566px"><svg viewBox="-1 0 30 28"><path d="M2.5 24.8L24 4.4" stroke="#000" stroke-width="1" fill="none" /><path d="M1.7 25.5L3.8 20.6L6.6 23.4Z" fill="#000"/><path d="M24.8 3.6L22.7 8.5L19.9 5.7Z" fill="#000"/><circle cx="9.4" cy="18.4" r="1.7" fill="#000"/><circle cx="17.6" cy="10.5" r="1.7" fill="#000"/></svg></div>
<div class="pb" style="left:319px;top:566px"><svg viewBox="-1 0 30 28"><path d="M3.2 24.6L23.6 4.5" stroke="#000" stroke-width="1" fill="none" /><rect x="1.6" y="23.0" width="3.2" height="3.2" fill="#000"/><circle cx="8.9" cy="19.1" r="1.7" fill="#000"/><circle cx="16.6" cy="11.4" r="1.7" fill="#000"/><rect x="22.0" y="2.9" width="3.2" height="3.2" fill="#000"/></svg></div>
<div class="pb" style="left:351px;top:566px"><svg viewBox="-1 0 30 28"><path d="M0.5 6.500H26M0.500 21.500H26M1.500 6.500V21.500M13.500 6.500V21.500M25.500 6.500V21.500" stroke="#000" stroke-width="1" fill="none"/><path d="M1.500 12.500H25.500" stroke="#A00000" stroke-width="1" fill="none"/><path d="M3.5 21.5L1.3 16.5L5.7 16.5Z" fill="#000"/><path d="M13.5 21.5L11.3 16.5L15.7 16.5Z" fill="#000"/><path d="M23.5 21.5L21.3 16.5L25.7 16.5Z" fill="#000"/></svg></div>
<div class="pb" style="left:383px;top:566px"><svg viewBox="-1 0 30 28"><path d="M1.500 6.500H25.500V21.500H1.500Z" stroke="#000" stroke-width="1" fill="none" stroke-dasharray="3 2"/><path d="M6.500 6.500V21.500M20.500 6.500V21.500" stroke="#000" stroke-width="1" fill="none" stroke-dasharray="3 2"/><path d="M13.500 6.500V21.500" stroke="#000" stroke-width="1" fill="none"/><path d="M1.500 12.500H25.500" stroke="#A00000" stroke-width="1" fill="none" stroke-dasharray="3 2"/><path d="M13.5 21.5L11.1 16.5L15.9 16.5Z" fill="#000"/></svg></div>
<div class="pb" style="left:415px;top:566px"><svg viewBox="-1 0 30 28"><circle cx="13.100" cy="14" r="10.400" stroke="#000" stroke-width="1" fill="none"/><circle cx="5.1" cy="10.2" r="1.7" fill="#000"/><circle cx="22" cy="10.8" r="1.7" fill="#000"/><circle cx="13.1" cy="24" r="1.7" fill="#000"/></svg></div>
<div class="pb" style="left:447px;top:566px"><svg viewBox="-1 0 30 28"><circle cx="12.900" cy="14" r="10.400" stroke="#000" stroke-width="1" fill="none"/><circle cx="6.1" cy="8.1" r="1.7" fill="#000"/><circle cx="20.3" cy="7.6" r="1.7" fill="#000"/><circle cx="23.1" cy="16.5" r="1.7" fill="#000"/><circle cx="16.5" cy="23.5" r="1.7" fill="#000"/><circle cx="6.8" cy="21.4" r="1.7" fill="#000"/></svg></div>
<div class="pb" style="left:479px;top:566px"><svg viewBox="-1 0 30 28"><ellipse cx="13.5" cy="14.5" rx="12.3" ry="12.3" stroke="#000" stroke-width="1" fill="none"/><ellipse cx="13.5" cy="14.5" rx="10.3" ry="10.3" stroke="#A00000" stroke-width="1" fill="none"/><ellipse cx="13.5" cy="14.5" rx="8.3" ry="8.3" stroke="#000" stroke-width="1" fill="none"/><path d="M13.5 1.5L13.5 27.5" stroke="#000" stroke-width="1" fill="none" /><path d="M1 14.5L27 14.5" stroke="#000" stroke-width="1" fill="none" /></svg></div>
<div class="pb" style="left:511px;top:566px"><svg viewBox="-1 0 30 28"><ellipse cx="13.5" cy="14.5" rx="12.3" ry="12.3" stroke="#000" stroke-width="1" fill="none"/><ellipse cx="13.5" cy="14.5" rx="10.3" ry="10.3" stroke="#A00000" stroke-width="1" fill="none"/><ellipse cx="13.5" cy="14.5" rx="8.3" ry="8.3" stroke="#000" stroke-width="1" fill="none"/><path d="M13.5 1.5L13.5 27.5" stroke="#000" stroke-width="1" fill="none" /><path d="M1 14.5L27 14.5" stroke="#000" stroke-width="1" fill="none" /></svg></div>
<div class="pb" style="left:543px;top:566px"><svg viewBox="-1 0 30 28"><circle cx="12.700" cy="14.400" r="10" stroke="#000" stroke-width="1" fill="none"/><path d="M9.500 14.500H16.500M12.500 11V18" stroke="#000" stroke-width="1.300" fill="none"/></svg></div>
<div class="pb" style="left:575px;top:566px"><svg viewBox="-1 0 30 28"><path d="M6.800 7A10.10 10.10 0 0 1 22.200 10.200A10.10 10.10 0 0 1 17.400 24" stroke="#000" stroke-width="1" fill="none"/><circle cx="6.8" cy="7" r="1.7" fill="#000"/><circle cx="22.2" cy="10.2" r="1.7" fill="#000"/><circle cx="17.4" cy="24" r="1.7" fill="#000"/></svg></div>
<div class="pb" style="left:607px;top:566px"><svg viewBox="-1 0 30 28"><path d="M3.1 8.4A12 12 0 1 1 20.4 24.2L17.8 20.5A7.5 7.5 0 1 0 7.0 10.7Z" stroke="#000" stroke-width="1" fill="none"/><path d="M5.0 9.5A9.8 9.8 0 1 1 19.1 22.4" stroke="#A00000" stroke-width="1" fill="none"/><path d="M13.5 1.9000000000000004L13.5 26.9" stroke="#000" stroke-width="1" fill="none" /><path d="M1.0 14.4L26.0 14.4" stroke="#000" stroke-width="1" fill="none" /></svg></div>
<div class="pb" style="left:223px;top:604px"><svg viewBox="-1 0 30 28"><path d="M3.6 8.2A12 12 0 1 1 20.9 24.0L18.3 20.3A7.5 7.5 0 1 0 7.5 10.4Z" stroke="#000" stroke-width="1" fill="none"/><path d="M5.5 9.3A9.8 9.8 0 1 1 19.6 22.2" stroke="#A00000" stroke-width="1" fill="none"/><path d="M14 1.6999999999999993L14 26.7" stroke="#000" stroke-width="1" fill="none" /><path d="M1.5 14.2L26.5 14.2" stroke="#000" stroke-width="1" fill="none" /></svg></div>
<div class="pb" style="left:255px;top:604px"><svg viewBox="-1 0 30 28"><ellipse cx="14.200" cy="14.600" rx="11.700" ry="8" stroke="#000" stroke-width="1" fill="none"/><circle cx="5.7" cy="9.3" r="1.7" fill="#000"/><circle cx="15.3" cy="6.6" r="1.7" fill="#000"/><circle cx="24.8" cy="14" r="1.7" fill="#000"/><circle cx="19.5" cy="21.6" r="1.7" fill="#000"/><circle cx="6.8" cy="20.8" r="1.7" fill="#000"/></svg></div>
<div class="pb" style="left:287px;top:604px"><svg viewBox="-1 0 30 28"><ellipse cx="14" cy="14.600" rx="11.700" ry="8" stroke="#000" stroke-width="1" fill="none"/><circle cx="6.6" cy="8.6" r="1.7" fill="#000"/><circle cx="15.7" cy="6.6" r="1.7" fill="#000"/><circle cx="21.9" cy="8.8" r="1.7" fill="#000"/><circle cx="25" cy="13.5" r="1.7" fill="#000"/><circle cx="21" cy="20.8" r="1.7" fill="#000"/><circle cx="13.6" cy="22.6" r="1.7" fill="#000"/><circle cx="3.4" cy="17" r="1.7" fill="#000"/></svg></div>
<div class="pb" style="left:319px;top:604px"><svg viewBox="-1 0 30 28"><ellipse cx="14.2" cy="14.6" rx="12.3" ry="9.2" stroke="#000" stroke-width="1" fill="none"/><ellipse cx="14.2" cy="14.6" rx="10.3" ry="7.199999999999999" stroke="#A00000" stroke-width="1" fill="none"/><ellipse cx="14.2" cy="14.6" rx="8.3" ry="5.199999999999999" stroke="#000" stroke-width="1" fill="none"/><path d="M14.2 1.5L14.2 27.5" stroke="#000" stroke-width="1" fill="none" /><path d="M1 14.6L27 14.6" stroke="#000" stroke-width="1" fill="none" /></svg></div>
<div class="pb" style="left:351px;top:604px"><svg viewBox="-1 0 30 28"><ellipse cx="13.6" cy="14.6" rx="12.3" ry="9.2" stroke="#000" stroke-width="1" fill="none"/><ellipse cx="13.6" cy="14.6" rx="10.3" ry="7.199999999999999" stroke="#A00000" stroke-width="1" fill="none"/><ellipse cx="13.6" cy="14.6" rx="8.3" ry="5.199999999999999" stroke="#000" stroke-width="1" fill="none"/><path d="M13.6 1.5L13.6 27.5" stroke="#000" stroke-width="1" fill="none" /><path d="M1 14.6L27 14.6" stroke="#000" stroke-width="1" fill="none" /></svg></div>
<div class="pb" style="left:383px;top:604px"><svg viewBox="-1 0 30 28"><path d="M2.800 14.600L8.700 3.600" stroke="#A00000" stroke-width="1" fill="none"/><path d="M8.700 3.600L18.300 25.200" stroke="#000" stroke-width="1" fill="none"/><path d="M18.300 25.200L24 12.500" stroke="#A00000" stroke-width="1" fill="none"/></svg></div>
<div class="pb" style="left:415px;top:604px"><svg viewBox="-1 0 30 28"><path d="M4 9C3 5 8 3 10 6C12 9 15 5 19 5C23 5 25 9 24 13C23 16 26 19 25 23C22 24 22 19 19 18C15 17 14 24 9 24C5 24 5 20 8 19C10 17 5 14 4 9Z" stroke="#000" stroke-width="1" fill="none" stroke-dasharray="1.500 1.500"/></svg></div>
<div class="pb" style="left:447px;top:604px"><svg viewBox="-1 0 30 28"><path d="M11.500 4.400V22.500M3 22.500H24M11.500 19.500H14.500V22.500" stroke="#000" stroke-width="1" fill="none"/></svg></div>
<div class="pb" style="left:479px;top:604px"><svg viewBox="-1 0 30 28"><path d="M2.1 23L20.5 4.4" stroke="#000" stroke-width="1" fill="none" /><path d="M3.6 25.6L22.2 6.5" stroke="#000" stroke-width="1" fill="none" /></svg></div>
<div class="pb" style="left:511px;top:604px"><svg viewBox="-1 0 30 28"><path d="M2.5 13.5L14.6 13.5" stroke="#000" stroke-width="1" fill="none" /><path d="M14.6 13.5L24.1 13.5" stroke="#000" stroke-width="1" fill="none" stroke-dasharray="2 1.500"/><path d="M4 22.6L21 5.7" stroke="#000" stroke-width="1" fill="none" /></svg></div>
<div class="pb" style="left:543px;top:604px"><svg viewBox="-1 0 30 28"><path d="M1.7 12.5L13.3 12.5" stroke="#000" stroke-width="1" fill="none" stroke-dasharray="2 1.500"/><path d="M4.9 24.7L23.9 6.5" stroke="#000" stroke-width="1" fill="none" /></svg></div>
<div class="pb" style="left:575px;top:604px"><svg viewBox="-1 0 30 28"><path d="M3.2 4L23.7 24.7" stroke="#000" stroke-width="1" fill="none" /><path d="M23.7 4L3.2 24.7" stroke="#000" stroke-width="1" fill="none" /><circle cx="13.5" cy="14.4" r="1.8" fill="#000"/></svg></div>
<div class="pb" style="left:607px;top:604px"><svg viewBox="-1 0 30 28"><ellipse cx="14" cy="14.600" rx="9.700" ry="10" stroke="#000" stroke-width="1" fill="none"/><path d="M3.4 24.1L23.5 4.4" stroke="#000" stroke-width="1" fill="none" /><rect x="4.8" y="18.7" width="3.6" height="3.6" fill="#000"/><rect x="18.5" y="6.0" width="3.6" height="3.6" fill="#000"/></svg></div>
<div class="pb" style="left:223px;top:642px"><svg viewBox="-1 0 30 28"><circle cx="10.400" cy="13.700" r="8" stroke="#000" stroke-width="1" fill="none"/><circle cx="17.400" cy="13.700" r="8" stroke="#000" stroke-width="1" fill="none"/><circle cx="14" cy="6.4" r="1.7" fill="#000"/><circle cx="14" cy="21" r="1.7" fill="#000"/></svg></div>
<div class="pb" style="left:255px;top:642px"><svg viewBox="-1 0 30 28"><ellipse cx="17" cy="17.900" rx="5.500" ry="6" stroke="#000" stroke-width="1" fill="none" transform="rotate(-25 17 17.900)"/><path d="M4.700 4.100L21.500 13.500M4.700 4.100L12.800 22.800" stroke="#A00000" stroke-width="1" fill="none"/></svg></div>
<div class="pb" style="left:287px;top:642px"><svg viewBox="-1 0 30 28"><circle cx="7.200" cy="8.400" r="5.300" stroke="#000" stroke-width="1" fill="none"/><circle cx="21.400" cy="22.200" r="4.200" stroke="#000" stroke-width="1" fill="none"/><path d="M10.8 4.5L24.5 19.2" stroke="#000" stroke-width="1" fill="none" /><path d="M3.2 12L18.3 25.3" stroke="#A00000" stroke-width="1" fill="none" /></svg></div>
<div class="pb" style="left:319px;top:642px"><svg viewBox="-1 0 30 28"><path d="M3.200 4.600L24.800 14.700L3.200 24.900" stroke="#000" stroke-width="1" fill="none"/><path d="M16.500 10.800L18.800 14.700L15.800 19" stroke="#A00000" stroke-width="1" fill="none"/></svg></div>
<div class="pb" style="left:351px;top:642px"><svg viewBox="-1 0 30 28"><path d="M3.4 8.8L24.2 5.8" stroke="#000" stroke-width="1" fill="none" /><path d="M3.4 12.6L24.2 14.7" stroke="#A00000" stroke-width="1.3" fill="none" /><path d="M3.4 12.4L17 13.2" stroke="#A00000" stroke-width="1" fill="none" /><path d="M3.4 16.4L24.2 21.5" stroke="#000" stroke-width="1" fill="none" /></svg></div>
<div class="pb" style="left:383px;top:642px"><svg viewBox="-1 0 30 28"></svg></div>
<div class="pb" style="left:415px;top:642px"><svg viewBox="-1 0 30 28"><circle cx="13.100" cy="14.300" r="12.400" stroke="#000" stroke-width="1" fill="none"/><path d="M11 14.3L24 14.3" stroke="#000" stroke-width="1" fill="none" /><path d="M25.5 14.3L20.5 16.3L20.5 12.3Z" fill="#000"/></svg></div>
<div class="pb" style="left:447px;top:642px"><svg viewBox="-1 0 30 28"><circle cx="12.900" cy="14.300" r="12.200" stroke="#000" stroke-width="1" fill="none"/><path d="M2 14.3L24 14.3" stroke="#000" stroke-width="1" fill="none" /><path d="M0.7 14.3L5.7 12.3L5.7 16.3Z" fill="#000"/><path d="M25.1 14.3L20.1 16.3L20.1 12.3Z" fill="#000"/></svg></div>
<div class="pb" style="left:479px;top:642px"><svg viewBox="-1 0 30 28"><path d="M24.800 22.100H2.100L21.200 4.500" stroke="#000" stroke-width="1" fill="none"/><path d="M12.700 12.600Q16.500 16 17 21" stroke="#000" stroke-width="1" fill="none"/><path d="M12.2 12.2L15.9 13.2L13.9 15.7Z" fill="#000"/><path d="M17.0 21.6L15.1 18.3L18.3 18.0Z" fill="#000"/></svg></div>
<div class="pb" style="left:511px;top:642px"><svg viewBox="-1 0 30 28"><path d="M2.500 3.700V25.300M24.500 3.700V25.300M3 14.500H24" stroke="#000" stroke-width="1.200" fill="none"/><path d="M2.8 14.5L7.8 12.5L7.8 16.5Z" fill="#000"/><path d="M24.2 14.5L19.2 16.5L19.2 12.5Z" fill="#000"/></svg></div>
<div class="pb" style="left:543px;top:642px"><svg viewBox="-1 0 30 28"><path d="M4.9 5.6L22.2 22.1" stroke="#000" stroke-width="1" fill="none" /><path d="M1.7 8.8L9.1 3.1" stroke="#000" stroke-width="1" fill="none" /><path d="M17.6 26.8L26 19" stroke="#000" stroke-width="1" fill="none" /><path d="M4.9 5.6L9.7 7.8L7.2 10.4Z" fill="#000"/><path d="M22.2 22.1L17.4 19.9L19.9 17.3Z" fill="#000"/></svg></div>
<div class="pb" style="left:575px;top:642px"><svg viewBox="-1 0 30 28"><path d="M4.200 6H22.600M13.400 6V23.400" stroke="#000" stroke-width="2.200" fill="none"/></svg></div>
<div class="pb" style="left:607px;top:642px"><svg viewBox="-1 0 30 28"><path d="M4.500 4V26.400M1.300 22.500H25" stroke="#000" stroke-width="1" fill="none"/><path d="M4.5 2.5L6.5 7.5L2.5 7.5Z" fill="#000"/><path d="M26.5 22.5L21.5 24.5L21.5 20.5Z" fill="#000"/><path d="M8 3.500L10.500 7L13 3.500M10.500 7V10.500" stroke="#000" stroke-width="1" fill="none"/><path d="M19 15L24 20M24 15L19 20" stroke="#000" stroke-width="1" fill="none"/></svg></div>
<div class="pb" style="left:223px;top:680px"><svg viewBox="-1 0 30 28"><path d="M3.500 4.300V20M22.500 4.300V20" stroke="#000" stroke-width="1.200" fill="none"/><path d="M5 11.5L21 11.5" stroke="#A00000" stroke-width="1.2" fill="none" /><path d="M3.8 11.5L8.8 9.5L8.8 13.5Z" fill="#A00000"/><path d="M22.2 11.5L17.2 13.5L17.2 9.5Z" fill="#A00000"/><path d="M6 19.500Q2 22.500 6.500 26.500M20 19.500Q24 22.500 19.500 26.500" stroke="#000" stroke-width="1" fill="none"/><circle cx="3.8" cy="22.8" r="1.6" fill="#000"/><circle cx="22.2" cy="22.8" r="1.6" fill="#000"/></svg></div>
<div class="pb" style="left:255px;top:680px"><svg viewBox="-1 0 30 28"><path d="M3 6.5L24.8 6.5" stroke="#000" stroke-width="1.2" fill="none" /><path d="M3 21.5L24.8 21.5" stroke="#000" stroke-width="1.2" fill="none" /><circle cx="3.5" cy="6.5" r="1.5" fill="#000"/><circle cx="24.3" cy="6.5" r="1.5" fill="#000"/><circle cx="3.5" cy="21.5" r="1.5" fill="#000"/><circle cx="24.3" cy="21.5" r="1.5" fill="#000"/><path d="M13.5 8L13.5 20" stroke="#A00000" stroke-width="1.2" fill="none" /><path d="M13.5 6.8L15.5 11.3L11.5 11.3Z" fill="#A00000"/><path d="M13.5 21.2L11.5 16.7L15.5 16.7Z" fill="#A00000"/></svg></div>
<div class="pb" style="left:287px;top:680px"><svg viewBox="-1 0 30 28"><path d="M2.4 21.5L24.2 21.5" stroke="#000" stroke-width="1.2" fill="none" /><circle cx="3" cy="21.5" r="1.5" fill="#000"/><circle cx="23.6" cy="21.5" r="1.5" fill="#000"/><ellipse cx="13.400" cy="5" rx="2.200" ry="1.700" fill="#000"/><path d="M13.5 8L13.5 20" stroke="#A00000" stroke-width="1.2" fill="none" /><path d="M13.5 6.5L15.5 11.0L11.5 11.0Z" fill="#A00000"/><path d="M13.5 21.2L11.5 16.7L15.5 16.7Z" fill="#A00000"/></svg></div>
<div class="pb" style="left:319px;top:680px"><svg viewBox="-1 0 30 28"><circle cx="13.400" cy="9.600" r="8.300" stroke="#000" stroke-width="1" fill="none"/><path d="M3.2 24.5L24.8 24.5" stroke="#000" stroke-width="1.2" fill="none" /><path d="M13.5 11L13.5 23.5" stroke="#A00000" stroke-width="1.2" fill="none" /><path d="M13.5 9.4L15.5 13.9L11.5 13.9Z" fill="#A00000"/><path d="M13.5 24.7L11.5 20.2L15.5 20.2Z" fill="#A00000"/></svg></div>
<div class="pb" style="left:351px;top:680px;border-color:#808080 #fff #fff #808080;background:#F6F4EC"><svg viewBox="-2 -1 30 28"><circle cx="7.900" cy="17" r="5.500" stroke="#000" stroke-width="1" fill="none"/><circle cx="20.600" cy="17" r="5.500" stroke="#000" stroke-width="1" fill="none"/><path d="M10 17L18.5 17" stroke="#A00000" stroke-width="1.4" fill="none" /><path d="M7.3 17.0L11.8 14.8L11.8 19.2Z" fill="#A00000"/><path d="M21.3 17.0L16.8 19.2L16.8 14.8Z" fill="#A00000"/></svg></div>
<div class="pb" style="left:383px;top:680px"><svg viewBox="-1 0 30 28"></svg></div>
<div class="pb" style="left:415px;top:680px"><svg viewBox="-1 0 30 28"><path d="M2.500 3.500H9.500L12.500 6.500V21.500H2.500Z" fill="#ECE9D8" stroke="#000"/><path d="M2.500 7.500H7M2.500 11.500H10M2.500 15.500H10M2.500 18.500H10" stroke="#000" stroke-width="1" fill="none"/><path d="M10.500 6.500H20.500L24.500 10.500V25.500H10.500Z" fill="#ECE9D8" stroke="#000"/><path d="M20.500 6.500V10.500H24.500M10.500 14.500H24.500M10.500 18.500H24.500M10.500 21.500H24.500" stroke="#000" stroke-width="1" fill="none"/></svg></div>
<div class="pb" style="left:447px;top:680px"><svg viewBox="-1 0 30 28"><rect x="3.500" y="4.500" width="20" height="20" stroke="#A00000" stroke-width="1" fill="none" stroke-dasharray="4 2.500" stroke-width="1.200"/></svg></div>
<div class="pb" style="left:479px;top:680px"><svg viewBox="-1 0 30 28"><path d="M3 5.500C6 4.500 10 7 13 11C16 15 19 19 24 23C19 21 14 18 11 14.500C8 11 6 8 3 5.500Z" fill="#000" stroke="#000" stroke-width="0.800"/><path d="M17.500 9C15 12 12 16 8.500 20C7 22 5 24.500 3.500 25C2.500 24 4 21 6 18.500C9 15 13 11.500 17.500 9Z" fill="#000" stroke="#000" stroke-width="1.200"/><path d="M17 10L23.7 5.3" stroke="#000" stroke-width="1" fill="none" /><path d="M20.5 5.5L21.5 8.5" stroke="#000" stroke-width="1" fill="none" /></svg></div>
<div class="pb" style="left:511px;top:680px"><svg viewBox="-1 0 30 28"><path d="M13.5 4.5L13.5 24.5" stroke="#000" stroke-width="1" fill="none" /><path d="M3.5 14.5L23.5 14.5" stroke="#000" stroke-width="1" fill="none" /><path d="M13.5 2.5L15.3 6.5L11.7 6.5Z" fill="#000"/><path d="M13.5 26.5L11.7 22.5L15.3 22.5Z" fill="#000"/><path d="M1.5 14.5L5.5 12.7L5.5 16.3Z" fill="#000"/><path d="M25.5 14.5L21.5 16.3L21.5 12.7Z" fill="#000"/><circle cx="13.5" cy="8" r="1.3" fill="#000"/><circle cx="13.5" cy="21" r="1.3" fill="#000"/><circle cx="7" cy="14.5" r="1.3" fill="#000"/><circle cx="20" cy="14.5" r="1.3" fill="#000"/></svg></div>
<div class="pb" style="left:543px;top:680px"><svg viewBox="-1 0 30 28"><path d="M2.700 23.500H11.500V6.400Z" stroke="#000" stroke-width="1" fill="none"/><path d="M24.400 23.500H15.500V6.400Z" stroke="#000" stroke-width="1" fill="none"/></svg></div>
<div class="pb" style="left:575px;top:680px"><svg viewBox="-1 0 30 28"><path d="M20.900 21.700A7.500 7.500 0 1 0 9 13.500" stroke="#000" stroke-width="1" fill="none"/><path d="M6.4 17.3L6.9 11.3L11.1 13.6Z" fill="#000"/></svg></div>
<div class="pb" style="left:607px;top:680px"><svg viewBox="-1 0 30 28"><path d="M2.3 19.7L25.6 19.7" stroke="#000" stroke-width="1.2" fill="none" /><circle cx="4" cy="19.7" r="1.6" fill="#000"/><circle cx="16.1" cy="19.7" r="1.6" fill="#000"/><path d="M26.5 19.7L22.0 21.5L22.0 17.9Z" fill="#000"/></svg></div>
<div class="abs" style="left:0;top:749px;width:1280px;height:1px;background:#fff"></div>
<div class="st" style="left:4px;width:152px;padding-left:4px;box-sizing:content-box"><span style="letter-spacing:0">坐标</span><b>:-32.0849,-33.3995</b></div>
<div class="st" style="left:159px;width:144px;padding-left:2px"><b>R/A:47.4700,221.5217</b></div>
<div class="st" style="left:307px;width:144px;padding-left:1px"><b>R/A:46.3137,226.1501</b></div>
<div class="st" style="left:455px;width:75px;padding-left:2px">对象捕捉<b>(开)</b></div>
<div class="st" style="left:534px;width:65px;padding-left:0px">十字线<b>(开)</b></div>
<div class="st" style="left:601px;width:77px;padding-left:1px">坐标单位<b>(mm)</b></div>
<div class="st" style="left:680px;width:94px;padding-left:1px">角度单位<b>(度)</b></div>
<div class="st" style="left:777px;width:66px;padding-left:1px">世界坐标系</div>
<div class="st" style="left:845px;width:54px;padding-left:2px">正交<b>(关)</b></div>
<div class="st" style="left:903px;width:56px;padding-left:1px">导航<b>(关)</b></div>
<div class="abs" style="left:0;top:770px;width:1280px;height:4px;background:linear-gradient(to bottom,#3A81F0,#2A6AE2)"></div>
<div class="abs" style="left:0;top:770px;width:94px;height:4px;background:linear-gradient(to bottom,#5DB85D,#3C983C);border-radius:0 4px 0 0"></div>
<div class="abs" style="left:1203px;top:770px;width:77px;height:4px;background:linear-gradient(to bottom,#1CB3F2,#1595E4);border-left:1px solid #0F3D99"></div>
</body>
</html>
